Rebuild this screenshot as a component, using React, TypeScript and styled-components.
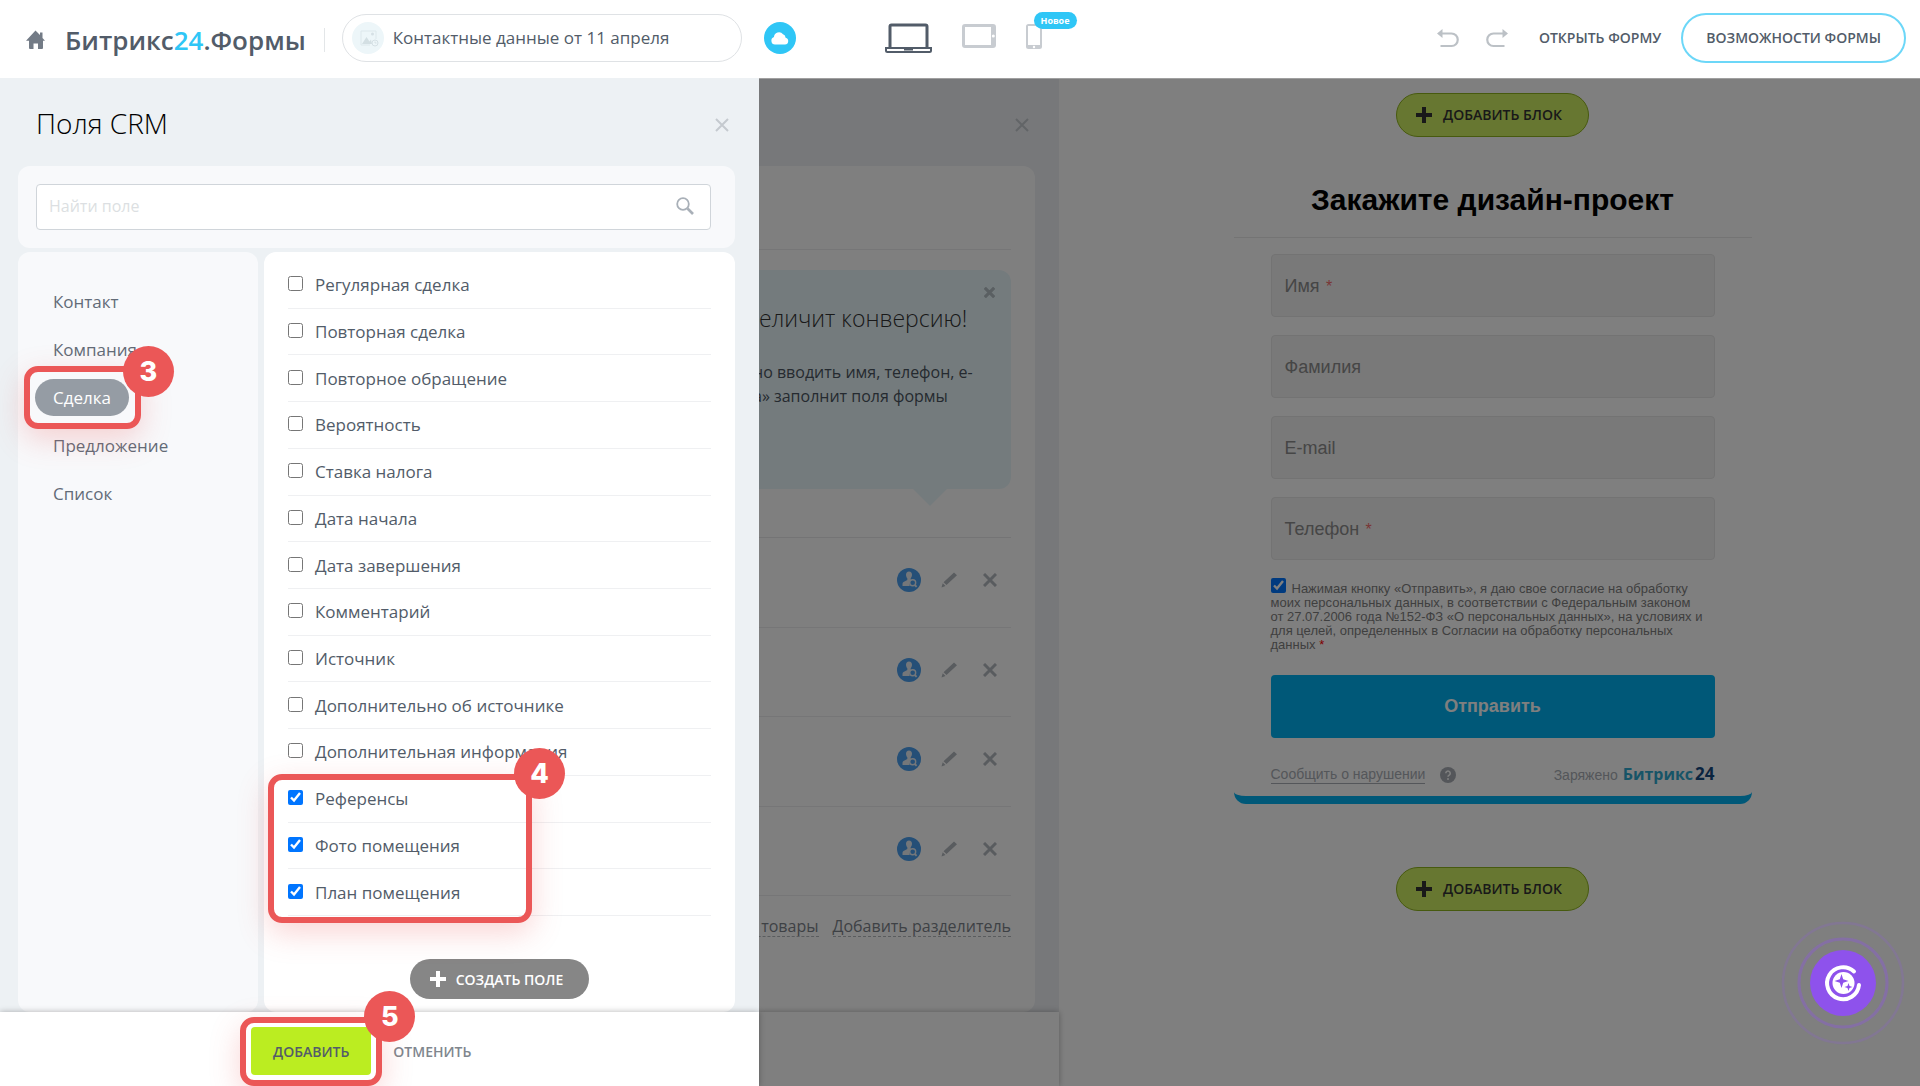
import React from "react";
import styled, { createGlobalStyle, css } from "styled-components";

const ui = `"Open Sans", "Noto Sans", sans-serif`;
const form = `"Liberation Sans", Arial, sans-serif`;

const Global = createGlobalStyle`
  *, *::before, *::after { box-sizing: border-box; }
  body { margin: 0; font-family: ${ui}; color: #525c69; background: #fff; }
  button, input { font: inherit; color: inherit; }
  button { background: none; border: 0; padding: 0; cursor: pointer; }
  h1, h2, p, ul { margin: 0; padding: 0; font-weight: inherit; }
  ul { list-style: none; }
  svg { display: block; flex: none; }
  a { color: inherit; text-decoration: none; }
`;

const Page = styled.div`
  display: flex;
  flex-direction: column;
  height: 100vh;
  overflow: hidden;
`;

/* ---------- top bar ---------- */

const TopBar = styled.header`
  display: grid;
  grid-template-columns: 1fr auto 1fr;
  height: 78px;
  flex: none;
  padding: 0 14px 0 20px;
  background: #fff;
`;

const BarSide = styled.div<{ $end?: boolean }>`
  display: flex;
  align-items: center;
  height: 75px;
  min-width: 0;
  padding-left: 6px;
  justify-content: ${(p) => (p.$end ? "flex-end" : "flex-start")};
`;

const HomeLink = styled.a`
  padding-top: 4px;
`;

const Brand = styled.a`
  margin-left: 20px;
  padding-top: 4px;
  font-size: 26px;
  line-height: 36px;
  font-weight: 600;
  white-space: nowrap;
  span { color: #2fc6f6; }
`;

const BarDivider = styled.span`
  width: 1px;
  height: 24px;
  margin: 4px 17px 0 18px;
  background: #e3e6e8;
`;

const PageName = styled.button`
  display: flex;
  align-items: center;
  gap: 9px;
  width: 400px;
  height: 48px;
  padding: 0 9px;
  border: 1px solid #dfe2e5;
  border-radius: 24px;
  font-size: 17px;
  white-space: nowrap;
`;

const CloudButton = styled.button`
  display: grid;
  place-items: center;
  width: 32px;
  height: 32px;
  margin-left: 22px;
  border-radius: 50%;
  background: #2fc6f6;
`;

const Devices = styled.nav`
  display: flex;
  align-items: flex-start;
  gap: 30px;
  padding-top: 23px;
`;

const Device = styled.button`
  position: relative;
`;

const NewBadge = styled.span`
  position: absolute;
  left: 8px;
  top: -11px;
  padding: 0 7px;
  border-radius: 9px;
  background: #2fc6f6;
  color: #fff;
  font-size: 9px;
  line-height: 17px;
  font-weight: 700;
`;

const History = styled.div`
  display: flex;
  gap: 27px;
  margin-right: 31px;
`;

const TextButton = styled.button`
  font-size: 14px;
  font-weight: 600;
  text-transform: uppercase;
  white-space: nowrap;
`;

const OutlineButton = styled(TextButton)`
  height: 50px;
  margin-left: 20px;
  padding: 0 23px;
  border: 2px solid #6cd7f8;
  border-radius: 25px;
`;

/* ---------- workspace ---------- */

const Workspace = styled.main`
  position: relative;
  display: grid;
  grid-template-columns: 759px 300px minmax(0, 1fr);
  flex: 1;
  min-height: 0;
`;

const Dim = styled.div`
  position: absolute;
  inset: 0 0 0 759px;
  border-top: 1px solid #a0a0a0;
  background: rgba(0, 0, 0, 0.5);
`;

const Panel = styled.section`
  position: relative;
  z-index: 1;
  display: flex;
  flex-direction: column;
  min-height: 0;
  background: #edf1f4;
`;

const PanelHead = styled.div`
  display: flex;
  align-items: center;
  justify-content: space-between;
  flex: none;
  height: 88px;
  padding: 2px 30px 0 36px;
`;

const PanelTitle = styled.h1`
  font-size: 28px;
  line-height: 36px;
  font-weight: 300;
  color: #000;
`;

const CloseButton = styled.button`
  padding-top: 3px;
`;

const SearchCard = styled.div`
  flex: none;
  margin: 0 24px 4px 18px;
  padding: 18px 24px 18px 18px;
  border-radius: 12px;
  background: #f8f9fb;
`;

const SearchBox = styled.label`
  display: flex;
  align-items: center;
  height: 46px;
  padding: 0 16px 2px 12px;
  border: 1px solid #d0d5da;
  border-radius: 4px;
  background: #fff;
  input {
    flex: 1;
    min-width: 0;
    border: 0;
    outline: 0;
    background: none;
    padding: 0;
    font-size: 16px;
  }
  input::placeholder { color: #dcdfe2; opacity: 1; }
`;

const PanelBody = styled.div`
  display: grid;
  grid-template-columns: 240px minmax(0, 1fr);
  gap: 6px;
  flex: 1;
  min-height: 0;
  padding: 0 24px 0 18px;
`;

const Sidebar = styled.nav`
  border-radius: 12px;
  background: #f8f9fb;
  padding: 31px 17px;
`;

const Categories = styled.ul`
  display: flex;
  flex-direction: column;
  align-items: flex-start;
  gap: 11px;
`;

const Category = styled.li`
  position: relative;
`;

const CategoryButton = styled.button<{ $active?: boolean }>`
  display: block;
  height: 37px;
  padding: 0 18px;
  border-radius: 19px;
  font-size: 17px;
  color: #626b77;
  ${(p) => p.$active && css`background: #959ca4; color: #fff;`}
`;

const FieldCard = styled.div`
  display: flex;
  flex-direction: column;
  min-height: 0;
  padding: 10px 24px 13px;
  border-radius: 12px;
  background: #fff;
`;

const FieldList = styled.ul`
  position: relative;
  display: grid;
  grid-auto-rows: 1fr;
  flex: 1;
`;

const FieldRow = styled.li`
  display: flex;
  border-bottom: 1px solid #eff0f2;
  label {
    display: flex;
    align-items: center;
    gap: 12px;
    flex: 1;
    font-size: 17px;
  }
  input { width: 15px; height: 15px; margin: 0 0 2px; }
`;

const CreateButton = styled.button`
  display: flex;
  align-items: center;
  gap: 10px;
  align-self: center;
  height: 40px;
  margin-top: 43px;
  padding: 0 26px 0 20px;
  border-radius: 20px;
  background: #868686;
  color: #fff;
  font-size: 14px;
  font-weight: 600;
  text-transform: uppercase;
`;

const PanelFooter = styled.footer`
  display: flex;
  align-items: center;
  flex: none;
  height: 74px;
  padding: 4px 0 0 251px;
  gap: 22px;
  background: #fff;
  box-shadow: 0 0 6px rgba(0, 0, 0, 0.3);
  color: #80868e;
`;

const AddWrap = styled.div`
  position: relative;
`;

const AddButton = styled(TextButton)`
  display: block;
  height: 48px;
  padding: 0 22px;
  border-radius: 4px;
  background: #bbed21;
  color: #535c69;
`;

/* ---------- numbered step markers ---------- */

const Marker = styled.span`
  position: absolute;
  z-index: 2;
  border: 6px solid #eb5757;
  border-radius: 14px;
  box-shadow: 0 10px 30px rgba(235, 87, 87, 0.25);
  pointer-events: none;
`;

const CategoryMarker = styled(Marker)`
  inset: -13px -12px -13px -11px;
`;

const RowsMarker = styled(Marker)`
  grid-row: 12 / 15;
  inset: -2px auto -7px -20px;
  width: 264px;
`;

const AddMarker = styled(Marker)`
  inset: -10px -11px -11px -11px;
`;

const Step = styled.b<{ $low?: boolean }>`
  position: absolute;
  right: -39px;
  top: ${(p) => (p.$low ? -26 : -32)}px;
  width: 51px;
  height: 51px;
  border-radius: 50%;
  background: #eb5757;
  color: #fff;
  font: 800 27px/51px Inter, sans-serif;
  text-align: center;
`;

/* ---------- form editor panel behind the overlay ---------- */

const BackPanel = styled.section`
  position: relative;
  display: flex;
  flex-direction: column;
  min-height: 0;
  min-width: 0;
  background: #eef0f4;
`;

const BackCard = styled.div`
  flex: 1;
  min-height: 0;
  margin-right: 24px;
  padding-right: 24px;
  border-radius: 0 12px 12px 0;
  background: #fff;
`;

const BackTop = styled.div`
  height: 84px;
  border-bottom: 1px solid #ececee;
`;

const CalloutArea = styled.div`
  height: 288px;
  padding-top: 20px;
  border-bottom: 1px solid #e8e8ea;
`;

const Callout = styled.aside`
  position: relative;
  height: 219px;
  border-radius: 0 12px 12px 0;
  background: #e9f7fb;
  &::after {
    content: "";
    position: absolute;
    right: 64px;
    top: 100%;
    border: 17px solid transparent;
    border-top-color: #e9f7fb;
    border-bottom: 0;
  }
`;

const CalloutText = styled.div`
  padding-top: 31px;
  white-space: nowrap;
  color: #4b5560;
  h2 {
    font-size: 23px;
    line-height: 34px;
    font-weight: 300;
    color: #333;
  }
  p {
    margin: 25px 0 0 -6px;
    font-size: 16px;
    line-height: 24px;
  }
`;

const CalloutClose = styled.button`
  position: absolute;
  right: 16px;
  top: 17px;
`;

const BackRows = styled.div`
  display: grid;
  grid-auto-rows: 1fr;
  height: 358px;
`;

const BackRow = styled.div`
  display: flex;
  align-items: center;
  justify-content: flex-end;
  padding: 0 8px 4px 0;
  border-bottom: 1px solid #ececee;
`;

const RowTools = styled.div`
  display: grid;
  grid-template-columns: 24px 20px 26px;
  gap: 18px;
  align-items: center;
  justify-items: center;
`;

const BackLinks = styled.div`
  display: flex;
  justify-content: flex-end;
  gap: 14px;
  padding-top: 21px;
  a {
    flex: none;
    border-bottom: 1px dashed #b4b8bd;
    font-size: 16px;
    line-height: 19px;
    color: #7d838b;
    white-space: nowrap;
  }
`;

const BackFooter = styled.div`
  flex: none;
  height: 74px;
  background: #fff;
  box-shadow: 0 0 6px rgba(0, 0, 0, 0.3);
`;

/* ---------- form preview ---------- */

const Preview = styled.section`
  display: flex;
  flex-direction: column;
  align-items: center;
  padding: 15px 0 0 6px;
  background: #fff;
  font-family: ${form};
`;

const AddBlock = styled.button`
  display: flex;
  align-items: center;
  gap: 11px;
  flex: none;
  height: 44px;
  padding: 0 26px 1px 19px;
  border: 1px solid #8fb41e;
  border-radius: 22px;
  background: #cfef63;
  color: #333;
  font-family: ${ui};
  font-size: 14px;
  font-weight: 600;
  text-transform: uppercase;
`;

const FormCard = styled.form`
  width: 518px;
  margin: 30px 0 63px;
  border-bottom: 8px solid #00b0f0;
  border-radius: 0 0 12px 12px;
`;

const FormTitle = styled.h2`
  height: 71px;
  padding-top: 16px;
  border-bottom: 1px solid #e9e9e9;
  font-size: 30px;
  line-height: 34px;
  font-weight: 700;
  text-align: center;
  color: #000;
`;

const FormBody = styled.div`
  display: flex;
  flex-direction: column;
  padding: 16px 37px 12px;
`;

const Field = styled.label`
  display: flex;
  align-items: center;
  gap: 6px;
  height: 63px;
  margin-bottom: 18px;
  padding: 1px 13px 0;
  border: 1px solid #e6e6e6;
  border-radius: 4px;
  background: #f2f2f2;
  font-size: 18px;
  color: #8c8c8c;
  input {
    flex: 1;
    min-width: 0;
    border: 0;
    outline: 0;
    background: none;
  }
`;

const Star = styled.span`
  margin-left: 2px;
  font-size: 16px;
  line-height: 16px;
  color: #f26d6d;
`;

const Consent = styled.label`
  padding-right: 10px;
  font-size: 13px;
  line-height: 14px;
  color: #7f7f7f;
  input {
    width: 15px;
    height: 15px;
    margin: 0 6px 0 0;
    vertical-align: baseline;
  }
  span { color: #f00; }
`;

const Submit = styled.button`
  height: 63px;
  margin-top: 23px;
  border-radius: 4px;
  background: #00b0f0;
  color: #fff;
  font-size: 18px;
  font-weight: 700;
`;

const FormFooter = styled.div`
  display: flex;
  align-items: center;
  margin-top: 27px;
  font-size: 14px;
  line-height: 18px;
  color: #a8adb4;
`;

const ReportLink = styled.a`
  margin-right: 15px;
  border-bottom: 1px solid #a8adb4;
`;

const Powered = styled.span`
  margin-left: auto;
  font-size: 14px;
  b { margin-left: 1px; font-family: ${ui}; font-size: 16px; color: #2fa9cf; }
  b + b { margin-left: 2px; font-size: 17px; color: #15487f; }
`;

const Assistant = styled.button`
  position: absolute;
  right: 15px;
  bottom: 41px;
  z-index: 2;
`;

/* ---------- icons ---------- */

const Cross = ({ size = 14, width = 2, color = "#c5cacf" }) => (
  <svg width={size} height={size} viewBox="0 0 14 14" stroke={color} strokeWidth={width} fill="none">
    <path d="M1 1l12 12M13 1L1 13" />
  </svg>
);

const Plus = ({ color }: { color: string }) => (
  <svg width="16" height="16" viewBox="0 0 16 16" stroke={color} strokeWidth="4">
    <path d="M8 0v16M0 8h16" />
  </svg>
);

const HomeIcon = () => (
  <svg width="19" height="20" viewBox="0 0 19 20" fill="#737b86">
    <path d="M9.500 0.500L14 5V2.500h2.500V8L19 10.800h-2V18a1 1 0 0 1-1 1h-4v-5.500H7.500V19H4a1 1 0 0 1-1-1v-7.200H0z" />
  </svg>
);

const PictureIcon = () => (
  <svg width="32" height="32" viewBox="0 0 32 32">
    <circle cx="16" cy="16" r="16" fill="#edf6f9" />
    <path d="M9 9h15v8M9 9v14h9" fill="none" stroke="#dde8ec" />
    <path d="M10 22l4.500-7 3 4.500 1.500-2 1 4.500z" fill="#d3dfe3" />
    <circle cx="20.500" cy="12" r="1.500" fill="#d5e0e5" />
    <circle cx="23" cy="21" r="3" fill="#edf6f9" stroke="#d5e0e5" />
    <path d="M23 19.500V21h1.500" fill="none" stroke="#d5e0e5" />
  </svg>
);

const CloudIcon = () => (
  <svg width="18" height="14" viewBox="0 0 18 14" fill="#fff">
    <path d="M4 13.500a3.800 3.800 0 0 1-1-7.400A5 5 0 0 1 12 3.200a4 4 0 0 1 2.600 3.600A3.400 3.400 0 0 1 14 13.500z" />
  </svg>
);

const LaptopIcon = () => (
  <svg width="47" height="30" viewBox="0 0 47 30" fill="none" stroke="#525c69">
    <path d="M5 25V3.500A1.500 1.500 0 0 1 6.500 2h34A1.500 1.500 0 0 1 42 3.500V25" strokeWidth="3" />
    <path d="M1 25h45v2.500a1.500 1.500 0 0 1-1.500 1.500h-42A1.500 1.500 0 0 1 1 27.500z" strokeWidth="2" />
    <path d="M19 26.500h9" strokeWidth="2" />
  </svg>
);

const TabletIcon = () => (
  <svg width="34" height="26" viewBox="0 0 34 26">
    <path fillRule="evenodd" fill="#c8ccd1" d="M3 1h28a3 3 0 0 1 3 3v18a3 3 0 0 1-3 3H3a3 3 0 0 1-3-3V4a3 3 0 0 1 3-3zM3 4v18h26V4z" />
    <circle cx="31.300" cy="13" r="1.500" fill="#fff" />
  </svg>
);

const PhoneIcon = () => (
  <svg width="16" height="27" viewBox="0 0 16 27">
    <path fillRule="evenodd" fill="#c8ccd1" d="M2.500 1h11A2.500 2.500 0 0 1 16 3.500v20a2.500 2.500 0 0 1-2.500 2.500h-11A2.500 2.500 0 0 1 0 23.500v-20A2.500 2.500 0 0 1 2.500 1zM2 3v19h12V3z" />
    <circle cx="8" cy="24" r="1.200" fill="#fff" />
  </svg>
);

const UndoIcon = () => (
  <svg width="22" height="20" viewBox="0 0 22 20">
    <path d="M4 5.500h10.500a6.200 6.200 0 0 1 0 12.500H3.500" fill="none" stroke="#bcc1c6" strokeWidth="2.200" />
    <path d="M0 5.500L5.500 1v9z" fill="#bcc1c6" />
  </svg>
);

const RedoIcon = () => (
  <svg width="22" height="20" viewBox="0 0 22 20">
    <path d="M18 5.500H7.500a6.200 6.200 0 0 0 0 12.500h11" fill="none" stroke="#bcc1c6" strokeWidth="2.200" />
    <path d="M22 5.500L16.500 1v9z" fill="#bcc1c6" />
  </svg>
);

const SearchIcon = () => (
  <svg width="18" height="18" viewBox="0 0 18 18" fill="none" stroke="#a9b0b8" strokeWidth="1.800">
    <circle cx="7" cy="7" r="5.800" />
    <path d="M11.500 11.500l5.500 5.500" strokeWidth="2.600" />
  </svg>
);

const PersonIcon = () => (
  <svg width="24" height="24" viewBox="0 0 24 24">
    <circle cx="12" cy="12" r="12" fill="#4a9fee" />
    <path d="M12 3.500c2 0 3 1.400 3 3.300 0 1.500-.6 2.800-1.300 3.500v1.500l2 1a4 4 0 0 0-3 5.200H5.500v-2c0-1.600 1-2.200 2.500-2.800l2.300-1.200v-1.700C9.600 9.600 9 8.400 9 6.800c0-1.900 1-3.300 3-3.300z" fill="#e8eef5" />
    <circle cx="15.700" cy="14.800" r="3" fill="#4a9fee" stroke="#e8eef5" strokeWidth="1.400" />
    <path d="M17.800 17l1.800 1.800" stroke="#e8eef5" strokeWidth="1.800" />
  </svg>
);

const PencilIcon = () => (
  <svg width="16" height="16" viewBox="0 0 16 16" fill="#b3b8bf">
    <path d="M13 0.500L16 3.200 5.500 13 2.500 10.200zM1.700 11.200l2.800 2.700L0.500 15.500z" />
  </svg>
);

const QuestionIcon = () => (
  <svg width="16" height="16" viewBox="0 0 16 16">
    <circle cx="8" cy="8" r="8" fill="#a8adb4" />
    <path d="M5.800 6.200a2.200 2.200 0 1 1 3.400 1.900c-.8.500-1.200.8-1.200 1.700" fill="none" stroke="#fff" strokeWidth="1.600" />
    <circle cx="8" cy="12" r="1" fill="#fff" />
  </svg>
);

const AssistantIcon = () => (
  <svg width="124" height="124" viewBox="0 0 124 124" fill="none">
    <circle cx="62" cy="62" r="60" stroke="#8e52ec" strokeOpacity=".18" strokeWidth="2.500" />
    <circle cx="62" cy="62" r="44" stroke="#8e52ec" strokeOpacity=".35" strokeWidth="3" />
    <circle cx="62" cy="62" r="33" fill="#8e52ec" />
    <path d="M73 50.500A16 16 0 1 0 78 64" stroke="#fff" strokeWidth="4" strokeLinecap="round" />
    <circle cx="62.500" cy="62" r="11" fill="#fff" />
    <path d="M60.500 53l1.700 5.300 5.300 1.700-5.300 1.700-1.700 5.300-1.700-5.300-5.300-1.700 5.300-1.700z" fill="#8e52ec" />
    <path d="M67.500 62l1 3 3 1-3 1-1 3-1-3-3-1 3-1z" fill="#8e52ec" />
  </svg>
);

/* ---------- data ---------- */

const categories = ["Контакт", "Компания", "Сделка", "Предложение", "Список"];

const fields = [
  "Регулярная сделка",
  "Повторная сделка",
  "Повторное обращение",
  "Вероятность",
  "Ставка налога",
  "Дата начала",
  "Дата завершения",
  "Комментарий",
  "Источник",
  "Дополнительно об источнике",
  "Дополнительная информация",
  "Референсы",
  "Фото помещения",
  "План помещения",
];

const checkedFields = ["Референсы", "Фото помещения", "План помещения"];

const formFields = [
  { label: "Имя", required: true, type: "text" },
  { label: "Фамилия", required: false, type: "text" },
  { label: "E-mail", required: false, type: "email" },
  { label: "Телефон", required: true, type: "tel" },
];

const AddBlockButton = () => (
  <AddBlock type="button">
    <Plus color="#333" />
    Добавить блок
  </AddBlock>
);

export default function App() {
  return (
    <Page>
      <Global />
      <TopBar>
        <BarSide>
          <HomeLink href="#home" aria-label="Главная"><HomeIcon /></HomeLink>
          <Brand href="#forms">Битрикс<span>24</span>.Формы</Brand>
          <BarDivider />
          <PageName>
            <PictureIcon />
            Контактные данные от 11 апреля
          </PageName>
          <CloudButton aria-label="Облако"><CloudIcon /></CloudButton>
        </BarSide>
        <Devices>
          <Device aria-label="Компьютер"><LaptopIcon /></Device>
          <Device aria-label="Планшет"><TabletIcon /></Device>
          <Device aria-label="Телефон">
            <PhoneIcon />
            <NewBadge>Новое</NewBadge>
          </Device>
        </Devices>
        <BarSide $end>
          <History>
            <button aria-label="Отменить"><UndoIcon /></button>
            <button aria-label="Повторить"><RedoIcon /></button>
          </History>
          <TextButton>Открыть форму</TextButton>
          <OutlineButton>Возможности формы</OutlineButton>
        </BarSide>
      </TopBar>

      <Workspace>
        <Panel>
          <PanelHead>
            <PanelTitle>Поля CRM</PanelTitle>
            <CloseButton aria-label="Закрыть"><Cross /></CloseButton>
          </PanelHead>
          <SearchCard>
            <SearchBox>
              <input type="text" placeholder="Найти поле" aria-label="Найти поле" />
              <SearchIcon />
            </SearchBox>
          </SearchCard>
          <PanelBody>
            <Sidebar>
              <Categories>
                {categories.map((name) => (
                  <Category key={name}>
                    <CategoryButton $active={name === "Сделка"}>{name}</CategoryButton>
                    {name === "Сделка" && <CategoryMarker><Step $low>3</Step></CategoryMarker>}
                  </Category>
                ))}
              </Categories>
            </Sidebar>
            <FieldCard>
              <FieldList>
                {fields.map((name) => (
                  <FieldRow key={name}>
                    <label>
                      <input type="checkbox" defaultChecked={checkedFields.includes(name)} />
                      {name}
                    </label>
                  </FieldRow>
                ))}
                <RowsMarker as="li"><Step>4</Step></RowsMarker>
              </FieldList>
              <CreateButton>
                <Plus color="#fff" />
                Создать поле
              </CreateButton>
            </FieldCard>
          </PanelBody>
          <PanelFooter>
            <AddWrap>
              <AddButton>Добавить</AddButton>
              <AddMarker><Step>5</Step></AddMarker>
            </AddWrap>
            <TextButton>Отменить</TextButton>
          </PanelFooter>
        </Panel>

        <BackPanel>
          <PanelHead>
            <span />
            <CloseButton aria-label="Закрыть"><Cross /></CloseButton>
          </PanelHead>
          <BackCard>
            <BackTop />
            <CalloutArea>
              <Callout>
                <CalloutText>
                  <h2>еличит конверсию!</h2>
                  <p>
                    но вводить имя, телефон, e-<br />
                    а» заполнит поля формы
                  </p>
                </CalloutText>
                <CalloutClose aria-label="Скрыть"><Cross size={11} width={4} color="#b4bfc4" /></CalloutClose>
              </Callout>
            </CalloutArea>
            <BackRows>
              {[1, 2, 3, 4].map((row) => (
                <BackRow key={row}>
                  <RowTools>
                    <PersonIcon />
                    <button aria-label="Изменить"><PencilIcon /></button>
                    <button aria-label="Удалить"><Cross width={3} color="#b3b8bf" /></button>
                  </RowTools>
                </BackRow>
              ))}
            </BackRows>
            <BackLinks>
              <a href="#goods">ь товары</a>
              <a href="#separator">Добавить разделитель</a>
            </BackLinks>
          </BackCard>
          <BackFooter />
        </BackPanel>

        <Preview>
          <AddBlockButton />
          <FormCard>
            <FormTitle>Закажите дизайн-проект</FormTitle>
            <FormBody>
              {formFields.map((f) => (
                <Field key={f.label}>
                  <span>{f.label}{f.required && <Star> *</Star>}</span>
                  <input type={f.type} />
                </Field>
              ))}
              <Consent>
                <input type="checkbox" defaultChecked />
                Нажимая кнопку «Отправить», я даю свое согласие на обработку моих персональных
                данных, в соответствии с Федеральным законом от 27.07.2006 года №152-ФЗ «О
                персональных данных», на условиях и для целей, определенных в Согласии на
                обработку персональных данных <span>*</span>
              </Consent>
              <Submit type="button">Отправить</Submit>
              <FormFooter>
                <ReportLink href="#report">Сообщить о нарушении</ReportLink>
                <QuestionIcon />
                <Powered>Заряжено <b>Битрикс</b><b>24</b></Powered>
              </FormFooter>
            </FormBody>
          </FormCard>
          <AddBlockButton />
        </Preview>

        <Dim />
        <Assistant aria-label="Помощник"><AssistantIcon /></Assistant>
      </Workspace>
    </Page>
  );
}
